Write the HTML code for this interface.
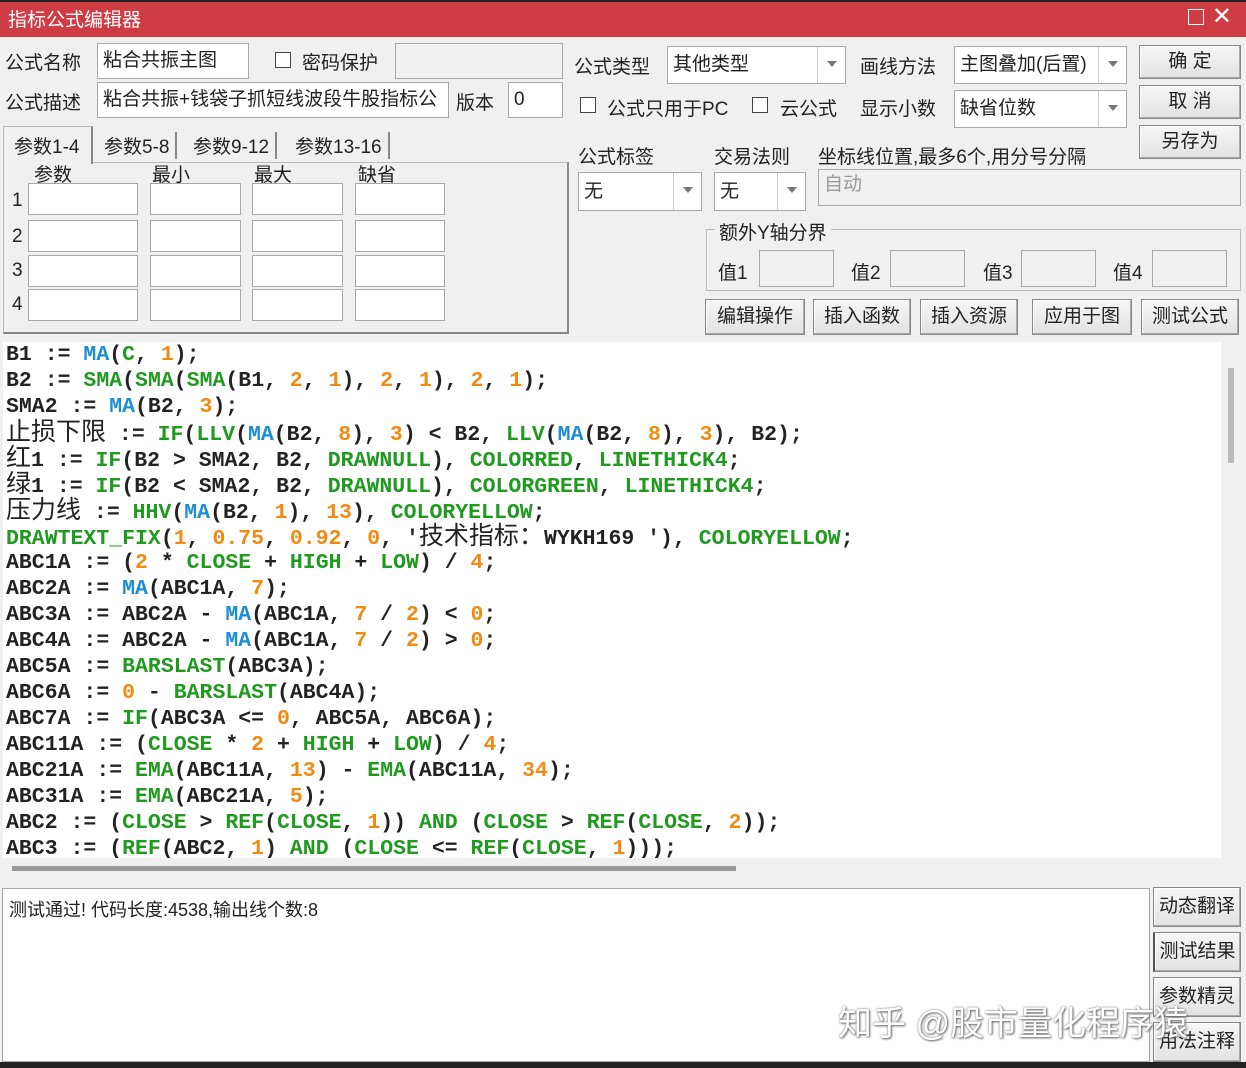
<!DOCTYPE html>
<html><head><meta charset="utf-8"><style>
*{box-sizing:border-box;margin:0;padding:0}
body{width:1246px;height:1068px;background:#f0f0f0;font-family:"Liberation Sans","Noto Sans CJK SC",sans-serif;font-size:19px;color:#222;position:relative;overflow:hidden}
.a{position:absolute;white-space:nowrap}
.title{left:0;top:0;width:1246px;height:37px;background:#cf3c43;color:#fff;font-size:19px;line-height:37px;padding-left:8px;border-top:2px solid #222}
.in{position:absolute;background:#fff;border:1px solid #a8a8a8;line-height:30px;padding-left:5px;white-space:nowrap;overflow:hidden}
.dis{background:#f0f0f0}
.btn{position:absolute;border:1px solid #888;background:linear-gradient(#f6f6f6,#e2e2e2);text-align:center;box-shadow:inset -1px -1px 0 #aaa,inset 1px 1px 0 #fff}
.dd{position:absolute;right:0;top:0;bottom:0;width:28px;border-left:1px solid #ccc;background:#fff}
.dd:after{content:"";position:absolute;left:9px;top:14px;border:5px solid transparent;border-top:6px solid #777}
.cb{position:absolute;width:16px;height:16px;border:1px solid #444;background:#fff}
.code{left:3px;top:342px;width:1218px;height:516px;background:#fff;font-family:"Liberation Mono","Noto Sans CJK SC",monospace;font-weight:bold;font-size:21.5px;line-height:26px;padding:0 0 0 3px;overflow:hidden}
.code div{white-space:pre;height:26px;overflow:visible}
.b{color:#1d8dd6}.g{color:#1f9a1f}.o{color:#f08a10}
.c{font-weight:normal;font-size:25px;line-height:20px;font-family:"Noto Sans CJK SC",sans-serif}
</style></head><body>
<div class="a title">指标公式编辑器</div>
<div class="a" style="right:42px;top:9px;width:16px;height:16px;border:1.5px solid #fff"></div>
<div class="a" style="right:14px;top:2px;color:#fff;font-size:24px">✕</div>

<div class="a" style="left:5px;top:48px">公式名称</div>
<div class="in" style="left:97px;top:43px;width:152px;height:36px;line-height:34px">粘合共振主图</div>
<div class="cb" style="left:275px;top:52px"></div>
<div class="a" style="left:302px;top:48px">密码保护</div>
<div class="in dis" style="left:395px;top:43px;width:168px;height:36px"></div>
<div class="a" style="left:5px;top:88px">公式描述</div>
<div class="in" style="left:97px;top:82px;width:352px;height:36px;line-height:34px">粘合共振+钱袋子抓短线波段牛股指标公</div>
<div class="a" style="left:456px;top:88px">版本</div>
<div class="in" style="left:508px;top:82px;width:55px;height:36px;line-height:34px">0</div>

<div class="a" style="left:3px;top:162px;width:566px;height:172px;border:1px solid #bbb;border-right:2px solid #888;border-bottom:2px solid #888"></div>
<div class="a" style="left:3px;top:126px;width:90px;height:38px;background:#f0f0f0;border:1px solid #bbb;border-bottom:none;border-right:2px solid #888;padding:5px 0 0 10px">参数1-4</div>
<div class="a" style="left:96px;top:132px;border-right:2px solid #888;padding:0 6px 0 8px">参数5-8</div>
<div class="a" style="left:185px;top:132px;border-right:2px solid #888;padding:0 6px 0 8px">参数9-12</div>
<div class="a" style="left:287px;top:132px;border-right:2px solid #888;padding:0 6px 0 8px">参数13-16</div>
<div class="a" style="left:34px;top:160px">参数</div>
<div class="a" style="left:152px;top:160px">最小</div>
<div class="a" style="left:254px;top:160px">最大</div>
<div class="a" style="left:358px;top:160px">缺省</div>
<div class="a" style="left:12px;top:190px">1</div><div class="a" style="left:12px;top:226px">2</div><div class="a" style="left:12px;top:260px">3</div><div class="a" style="left:12px;top:294px">4</div>
<div class="in" style="left:28px;top:183px;width:110px;height:32px"></div><div class="in" style="left:150px;top:183px;width:91px;height:32px"></div><div class="in" style="left:252px;top:183px;width:91px;height:32px"></div><div class="in" style="left:355px;top:183px;width:90px;height:32px"></div>
<div class="in" style="left:28px;top:220px;width:110px;height:32px"></div><div class="in" style="left:150px;top:220px;width:91px;height:32px"></div><div class="in" style="left:252px;top:220px;width:91px;height:32px"></div><div class="in" style="left:355px;top:220px;width:90px;height:32px"></div>
<div class="in" style="left:28px;top:255px;width:110px;height:32px"></div><div class="in" style="left:150px;top:255px;width:91px;height:32px"></div><div class="in" style="left:252px;top:255px;width:91px;height:32px"></div><div class="in" style="left:355px;top:255px;width:90px;height:32px"></div>
<div class="in" style="left:28px;top:289px;width:110px;height:32px"></div><div class="in" style="left:150px;top:289px;width:91px;height:32px"></div><div class="in" style="left:252px;top:289px;width:91px;height:32px"></div><div class="in" style="left:355px;top:289px;width:90px;height:32px"></div>

<div class="a" style="left:574px;top:52px">公式类型</div>
<div class="in" style="left:667px;top:46px;width:179px;height:38px;line-height:36px">其他类型<div class="dd"></div></div>
<div class="a" style="left:860px;top:52px">画线方法</div>
<div class="in" style="left:954px;top:46px;width:173px;height:38px;line-height:36px">主图叠加(后置)<div class="dd"></div></div>
<div class="cb" style="left:580px;top:97px"></div>
<div class="a" style="left:607px;top:94px">公式只用于PC</div>
<div class="cb" style="left:752px;top:97px"></div>
<div class="a" style="left:780px;top:94px">云公式</div>
<div class="a" style="left:860px;top:94px">显示小数</div>
<div class="in" style="left:954px;top:90px;width:173px;height:38px;line-height:36px">缺省位数<div class="dd"></div></div>
<div class="btn" style="left:1139px;top:45px;width:102px;height:34px;line-height:32px">确 定</div>
<div class="btn" style="left:1139px;top:85px;width:102px;height:34px;line-height:32px">取 消</div>
<div class="btn" style="left:1139px;top:125px;width:102px;height:34px;line-height:32px">另存为</div>
<div class="a" style="left:578px;top:142px">公式标签</div>
<div class="a" style="left:714px;top:142px">交易法则</div>
<div class="a" style="left:818px;top:142px">坐标线位置,最多6个,用分号分隔</div>
<div class="in" style="left:578px;top:172px;width:124px;height:39px;line-height:37px">无<div class="dd"></div></div>
<div class="in" style="left:714px;top:172px;width:92px;height:39px;line-height:37px">无<div class="dd"></div></div>
<div class="in dis" style="left:818px;top:169px;width:423px;height:37px;color:#999">自动</div>
<div class="a" style="left:706px;top:229px;width:535px;height:62px;border:1px solid #bbb"></div>
<div class="a" style="left:715px;top:218px;background:#f0f0f0;padding:0 4px">额外Y轴分界</div>
<div class="a" style="left:718px;top:258px">值1</div><div class="in dis" style="left:759px;top:250px;width:75px;height:37px"></div>
<div class="a" style="left:851px;top:258px">值2</div><div class="in dis" style="left:890px;top:250px;width:75px;height:37px"></div>
<div class="a" style="left:983px;top:258px">值3</div><div class="in dis" style="left:1021px;top:250px;width:75px;height:37px"></div>
<div class="a" style="left:1113px;top:258px">值4</div><div class="in dis" style="left:1152px;top:250px;width:75px;height:37px"></div>
<div class="btn" style="left:705px;top:299px;width:100px;height:36px;line-height:34px">编辑操作</div>
<div class="btn" style="left:813px;top:299px;width:98px;height:36px;line-height:34px">插入函数</div>
<div class="btn" style="left:920px;top:299px;width:98px;height:36px;line-height:34px">插入资源</div>
<div class="btn" style="left:1032px;top:299px;width:100px;height:36px;line-height:34px">应用于图</div>
<div class="btn" style="left:1141px;top:299px;width:98px;height:36px;line-height:34px">测试公式</div>

<div class="a code">
<div>B1 := <span class="b">MA</span>(<span class="g">C</span>, <span class="o">1</span>);</div>
<div>B2 := <span class="g">SMA</span>(<span class="g">SMA</span>(<span class="g">SMA</span>(B1, <span class="o">2</span>, <span class="o">1</span>), <span class="o">2</span>, <span class="o">1</span>), <span class="o">2</span>, <span class="o">1</span>);</div>
<div>SMA2 := <span class="b">MA</span>(B2, <span class="o">3</span>);</div>
<div><span class="c">止损下限</span> := <span class="g">IF</span>(<span class="g">LLV</span>(<span class="b">MA</span>(B2, <span class="o">8</span>), <span class="o">3</span>) &lt; B2, <span class="g">LLV</span>(<span class="b">MA</span>(B2, <span class="o">8</span>), <span class="o">3</span>), B2);</div>
<div><span class="c">红</span>1 := <span class="g">IF</span>(B2 &gt; SMA2, B2, <span class="g">DRAWNULL</span>), <span class="g">COLORRED</span>, <span class="g">LINETHICK4</span>;</div>
<div><span class="c">绿</span>1 := <span class="g">IF</span>(B2 &lt; SMA2, B2, <span class="g">DRAWNULL</span>), <span class="g">COLORGREEN</span>, <span class="g">LINETHICK4</span>;</div>
<div><span class="c">压力线</span> := <span class="g">HHV</span>(<span class="b">MA</span>(B2, <span class="o">1</span>), <span class="o">13</span>), <span class="g">COLORYELLOW</span>;</div>
<div><span class="g">DRAWTEXT_FIX</span>(<span class="o">1</span>, <span class="o">0.75</span>, <span class="o">0.92</span>, <span class="o">0</span>, '<span class="c">技术指标：</span>WYKH169 '), <span class="g">COLORYELLOW</span>;</div>
<div>ABC1A := (<span class="o">2</span> * <span class="g">CLOSE</span> + <span class="g">HIGH</span> + <span class="g">LOW</span>) / <span class="o">4</span>;</div>
<div>ABC2A := <span class="b">MA</span>(ABC1A, <span class="o">7</span>);</div>
<div>ABC3A := ABC2A - <span class="b">MA</span>(ABC1A, <span class="o">7</span> / <span class="o">2</span>) &lt; <span class="o">0</span>;</div>
<div>ABC4A := ABC2A - <span class="b">MA</span>(ABC1A, <span class="o">7</span> / <span class="o">2</span>) &gt; <span class="o">0</span>;</div>
<div>ABC5A := <span class="g">BARSLAST</span>(ABC3A);</div>
<div>ABC6A := <span class="o">0</span> - <span class="g">BARSLAST</span>(ABC4A);</div>
<div>ABC7A := <span class="g">IF</span>(ABC3A &lt;= <span class="o">0</span>, ABC5A, ABC6A);</div>
<div>ABC11A := (<span class="g">CLOSE</span> * <span class="o">2</span> + <span class="g">HIGH</span> + <span class="g">LOW</span>) / <span class="o">4</span>;</div>
<div>ABC21A := <span class="g">EMA</span>(ABC11A, <span class="o">13</span>) - <span class="g">EMA</span>(ABC11A, <span class="o">34</span>);</div>
<div>ABC31A := <span class="g">EMA</span>(ABC21A, <span class="o">5</span>);</div>
<div>ABC2 := (<span class="g">CLOSE</span> &gt; <span class="g">REF</span>(<span class="g">CLOSE</span>, <span class="o">1</span>)) <span class="g">AND</span> (<span class="g">CLOSE</span> &gt; <span class="g">REF</span>(<span class="g">CLOSE</span>, <span class="o">2</span>));</div>
<div>ABC3 := (<span class="g">REF</span>(ABC2, <span class="o">1</span>) <span class="g">AND</span> (<span class="g">CLOSE</span> &lt;= <span class="g">REF</span>(<span class="g">CLOSE</span>, <span class="o">1</span>)));</div>
</div>
<div class="a" style="left:1228px;top:368px;width:6px;height:95px;background:#bbb"></div>
<div class="a" style="left:12px;top:866px;width:724px;height:5px;background:#999"></div>

<div class="a" style="left:2px;top:888px;width:1148px;height:174px;background:#fff;border:1px solid #aaa"></div>
<div class="a" style="left:9px;top:896px;font-size:18px">测试通过! 代码长度:4538,输出线个数:8</div>
<div class="btn" style="left:1153px;top:887px;width:88px;height:40px;line-height:38px">动态翻译</div>
<div class="btn" style="left:1153px;top:932px;width:88px;height:40px;line-height:38px;border-left:2px solid #555">测试结果</div>
<div class="btn" style="left:1153px;top:977px;width:88px;height:40px;line-height:38px">参数精灵</div>
<div class="btn" style="left:1153px;top:1022px;width:88px;height:40px;line-height:38px">用法注释</div>
<div class="a" style="left:838px;top:996px;font-size:34px;color:#fff;text-shadow:0 0 2px #777,1px 1px 2px #666">知乎 @股市量化程序猿</div>
<div class="a" style="left:0;top:1062px;width:1246px;height:6px;background:#222"></div>
</body></html>
